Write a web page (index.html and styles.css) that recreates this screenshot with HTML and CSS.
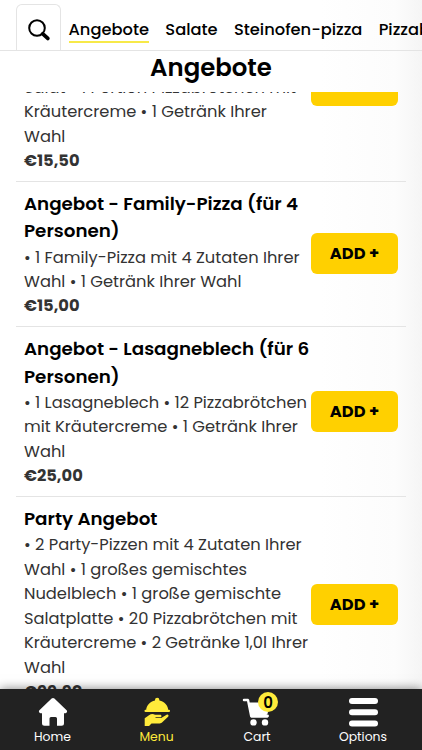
FILE: index.html
```
<!DOCTYPE html>
<html lang="de">
<head>
<meta charset="utf-8">
<title>Angebote</title>
<link rel="stylesheet" href="styles.css">
</head>
<body>
<div class="app">
  <header class="tabs">
    <button class="search" aria-label="Suche">
      <svg width="24" height="24" viewBox="0 0 24 24"><circle cx="10" cy="10" r="7.8" fill="none" stroke="#000" stroke-width="2"/><path d="M15.8 15.8l5 4.6" stroke="#000" stroke-width="3.8" stroke-linecap="round"/></svg>
    </button>
    <a class="tab tab-active">Angebote</a>
    <a class="tab">Salate</a>
    <a class="tab">Steinofen-pizza</a>
    <a class="tab">Pizzabrötchen</a>
  </header>
  <h1 class="heading">Angebote</h1>
  <main class="list">
    <article class="item item-first">
      <div class="info">
        <p class="desc">Salat • 1 Portion Pizzabrötchen mit<br>Kräutercreme • 1 Getränk Ihrer<br>Wahl</p>
        <p class="price">€15,50</p>
      </div>
      <button class="add add-first" aria-label="Add"></button>
    </article>
    <article class="item">
      <div class="info">
        <h2 class="title">Angebot - Family-Pizza (für 4<br>Personen)</h2>
        <p class="desc">• 1 Family-Pizza mit 4 Zutaten Ihrer<br>Wahl • 1 Getränk Ihrer Wahl</p>
        <p class="price">€15,00</p>
      </div>
      <button class="add">ADD +</button>
    </article>
    <article class="item">
      <div class="info">
        <h2 class="title">Angebot - Lasagneblech (für 6<br>Personen)</h2>
        <p class="desc">• 1 Lasagneblech • 12 Pizzabrötchen<br>mit Kräutercreme • 1 Getränk Ihrer<br>Wahl</p>
        <p class="price">€25,00</p>
      </div>
      <button class="add">ADD +</button>
    </article>
    <article class="item">
      <div class="info">
        <h2 class="title">Party Angebot</h2>
        <p class="desc">• 2 Party-Pizzen mit 4 Zutaten Ihrer<br>Wahl • 1 großes gemischtes<br>Nudelblech • 1 große gemischte<br>Salatplatte • 20 Pizzabrötchen mit<br>Kräutercreme • 2 Getränke 1,0l Ihrer<br>Wahl</p>
        <p class="price">€99,90</p>
      </div>
      <button class="add">ADD +</button>
    </article>
  </main>
  <nav class="nav">
    <a class="nav-item">
      <svg width="30" height="30" viewBox="0 0 30 30" fill="#fff"><path d="M13.6 1.600a2 2 0 0 1 2.800 0L28.600 13.300a1.700 1.700 0 0 1-1.100 2.900H26v10a2.500 2.500 0 0 1-2.500 2.500H19v-7.200a1.500 1.500 0 0 0-1.500-1.500h-4.500a1.500 1.500 0 0 0-1.500 1.500v7.200H6.500A2.500 2.500 0 0 1 4 26.200v-10H2.500a1.700 1.700 0 0 1-1.100-2.900z"/></svg>
      <span>Home</span>
    </a>
    <a class="nav-item nav-active">
      <svg width="30" height="30" viewBox="0 0 30 30" fill="#ffeb3b"><path d="M13 3.600V3a2.200 2.200 0 0 1 4.400 0v.6C22.500 4.600 26 8.700 26.200 13H4.200C4.500 8.700 8 4.600 13 3.600z"/><rect x="2.500" y="12.700" width="25.500" height="2.300" rx="1"/><path d="M2.700 21.200L7 18.200c2-1.500 4.200-1.600 6-.5h5.200c1.700 0 1.700 2.500 0 2.600h-4.700v.8h5.700l5.400-3.300c1.500-.8 2.600.9 1.500 2L20 25.600c-1 .8-2 1-3.200 1H9.500l-2.500 2.300H2.700z"/></svg>
      <span>Menu</span>
    </a>
    <a class="nav-item">
      <svg width="30" height="30" viewBox="0 0 30 30" fill="#fff"><path d="M2 1.700h3.500c1 0 1.600.5 1.800 1.500l.4 2.300H28l-2.300 10.700c-.3 1.200-1 1.800-2.200 1.800H10l.5 2.100h15.300v.3H9.500c-.8 0-1.300-.4-1.500-1.200L5 4.200H2a1.200 1.200 0 0 1 0-2.500z"/><path d="M8 17.500h17.500a1.400 1.400 0 0 1 0 2.900H9z"/><circle cx="11.500" cy="25.400" r="3.200"/><circle cx="23" cy="25.400" r="3.200"/></svg>
      <span class="badge">0</span>
      <span>Cart</span>
    </a>
    <a class="nav-item">
      <svg width="30" height="30" viewBox="0 0 30 30" fill="#fff"><rect x="1" y="1" width="29" height="6" rx="3"/><rect x="1" y="12.300" width="29" height="6" rx="3"/><rect x="1" y="23.600" width="29" height="6" rx="3"/></svg>
      <span>Options</span>
    </a>
  </nav>
</div>
</body>
</html>
```
FILE: styles.css
```
* { box-sizing: border-box; }
body { margin: 0; font-family: Poppins, Inter, sans-serif; color: #000; }
button { font-family: inherit; padding: 0; }
h1, h2, p { margin: 0; }

.app {
  height: 750px;
  display: flex;
  flex-direction: column;
  overflow: hidden;
  background: linear-gradient(to right, #fff 320px, #fcfcfc 395px, #f5f5f5 422px);
}

.tabs {
  height: 51px;
  flex: none;
  display: flex;
  align-items: flex-end;
  padding-left: 16px;
  border-bottom: 1px solid #e4e4e4;
  overflow: hidden;
  white-space: nowrap;
}
.search {
  flex: none;
  width: 45px;
  height: 46px;
  margin-right: 7.5px;
  border: 1px solid #e4e4e4;
  border-bottom: 0;
  border-radius: 6px 6px 0 0;
  background: #fff;
  display: flex;
  align-items: center;
  justify-content: center;
  padding-top: 4px;
}
.tab {
  flex: none;
  font-size: 16.3px;
  font-weight: 500;
  line-height: 22px;
  margin: 0 16.3px 7px 0;
  border-bottom: 2px solid transparent;
}
.tab-active { border-color: #f7e948; }

.heading {
  flex: none;
  height: 41px;
  font-size: 24.4px;
  font-weight: 600;
  line-height: 33px;
  text-align: center;
}

.list { flex: 1; min-height: 0; padding: 0 16px; overflow: hidden; }
.item {
  display: flex;
  align-items: center;
  justify-content: space-between;
  padding: 8px;
  border-bottom: 1px solid #e4e4e4;
}
.item-first { margin-top: -102px; padding-top: 85px; }
.item-first .add { margin-top: -76px; }
.info { width: 287px; flex: none; white-space: nowrap; }
.title { font-size: 18.3px; font-weight: 600; line-height: 27.5px; }
.desc, .price { font-size: 16.3px; line-height: 24.46px; color: #333; }
.desc { padding-top: 0.8px; margin-bottom: -0.5px; }
.price { font-weight: 700; margin-bottom: -0.3px; }
.add {
  flex: none;
  width: 87px;
  height: 41px;
  border: 0;
  border-radius: 6px;
  background: #ffd000;
  color: #000;
  font-size: 16.3px;
  font-weight: 700;
}

.nav {
  position: relative;
  flex: none;
  height: 61px;
  display: grid;
  grid-template-columns: 105px 103px 98px 114px;
  background: #222;
  color: #fff;
  box-shadow: 0 0 10px rgba(0, 0, 0, 0.5);
}
.nav-item {
  position: relative;
  display: flex;
  flex-direction: column;
  align-items: center;
  padding-top: 8px;
  font-size: 12.4px;
  line-height: 19px;
}
.nav-active { color: #ffeb3b; }
.badge {
  position: absolute;
  left: 50px;
  top: 3px;
  width: 20px;
  height: 20px;
  border-radius: 50%;
  background: #ffeb3b;
  color: #000;
  font-size: 15px;
  font-weight: 600;
  line-height: 21px;
  text-align: center;
}
```
